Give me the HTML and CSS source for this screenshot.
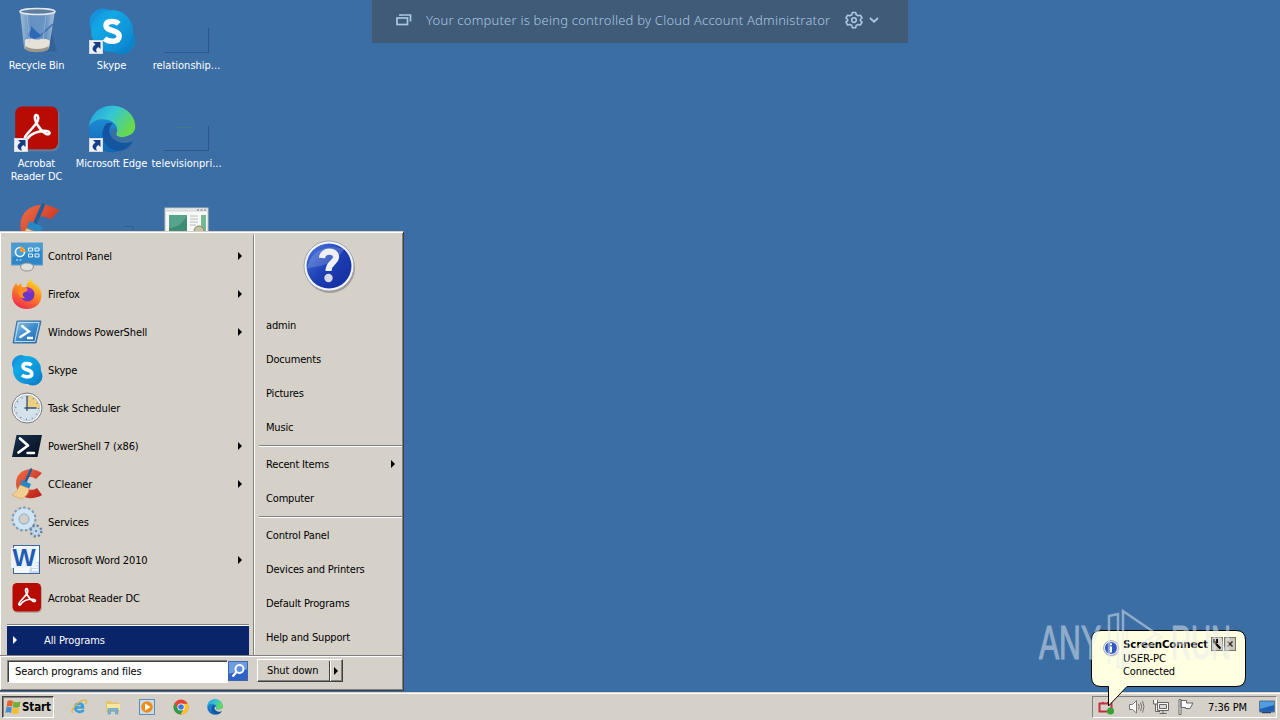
FILE: index.html
```
<!DOCTYPE html>
<html lang="en">
<head>
    <meta charset="UTF-8">
    <title>Desktop</title>
    <link rel="stylesheet" href="styles.css">
</head>
<body>

<!-- shared icons -->
<svg class="defs" width="0" height="0">
    <defs>
        <linearGradient id="gSkype" x1="0" y1="0" x2="1" y2="1"><stop offset="0" stop-color="#1590d8"/><stop offset=".3" stop-color="#12a8e6"/><stop offset="1" stop-color="#0c82cc"/></linearGradient>
        <linearGradient id="gEdgeTop" x1="0" y1="0" x2="1" y2=".5"><stop offset="0" stop-color="#1f9ee0"/><stop offset=".5" stop-color="#35c6d4"/><stop offset="1" stop-color="#68da4c"/></linearGradient>
        <linearGradient id="gEdgeLeft" x1="0" y1="0" x2="0" y2="1"><stop offset="0" stop-color="#239be0"/><stop offset="1" stop-color="#1264b4"/></linearGradient>
        <linearGradient id="gFox" x1=".8" y1="0" x2=".3" y2="1"><stop offset="0" stop-color="#ffe42e"/><stop offset=".45" stop-color="#ff8a1d"/><stop offset="1" stop-color="#f0284f"/></linearGradient>
        <linearGradient id="gPs" x1="0" y1="0" x2="1" y2="1"><stop offset="0" stop-color="#9ed0ec"/><stop offset=".5" stop-color="#3d8ccc"/><stop offset="1" stop-color="#1c61a4"/></linearGradient>
        <linearGradient id="gPs7" x1="0" y1="0" x2="1" y2="1"><stop offset="0" stop-color="#16304e"/><stop offset="1" stop-color="#080f1c"/></linearGradient>
        <linearGradient id="gCc" x1="0" y1="0" x2="1" y2="1"><stop offset="0" stop-color="#f07048"/><stop offset="1" stop-color="#b81c16"/></linearGradient>
        <linearGradient id="gBin" x1="0" y1="0" x2="1" y2="0"><stop offset="0" stop-color="#a9c3da"/><stop offset=".3" stop-color="#6995c4"/><stop offset=".75" stop-color="#6f9ac8"/><stop offset="1" stop-color="#b6cbdc"/></linearGradient>
        <linearGradient id="gHelp" x1="0" y1="0" x2="1" y2="1"><stop offset="0" stop-color="#4c7be0"/><stop offset=".5" stop-color="#1d3eb4"/><stop offset="1" stop-color="#122c9a"/></linearGradient>

        <symbol id="skype" viewBox="0 0 32 32">
            <circle cx="10" cy="10" r="9" fill="#1593dc"/><circle cx="22" cy="22" r="9.5" fill="#0c84cc"/>
            <circle cx="16" cy="16" r="14" fill="url(#gSkype)"/>
            <path d="M20.500 11.200C18.500 9.200 12 8.600 12 12.400 12 16.600 20.800 15 20.800 19.400 20.800 24 13.500 23.400 11 21" fill="none" stroke="#fff" stroke-width="3.600"/>
        </symbol>
        <symbol id="acrobat" viewBox="0 0 32 32">
            <rect x="2" y="2" width="29" height="29" rx="5" fill="#8c8580" opacity=".5"/>
            <rect x="1.500" y="1" width="28.500" height="28.500" rx="4.500" fill="#b70b04"/>
            <path d="M8 21.500C9 18.500 14 15.500 16.500 10.500 17.500 7.500 15.800 5.800 14.800 7 13.500 9.500 17.500 16.500 22 19.300 25 20.400 25.500 17.500 22 17.300 17.500 17 12 18.800 9.500 22.500 8.800 23.500 7.500 23 8 21.500Z" fill="none" stroke="#fff" stroke-width="1.700" stroke-linejoin="round"/>
        </symbol>
        <symbol id="edge" viewBox="0 0 32 32">
            <circle cx="16" cy="16" r="15.500" fill="url(#gEdgeLeft)"/>
            <path d="M.7 14C2 5 9 .5 16 .5 25 .5 31.500 7 31.500 14 31.500 19 27.500 21.500 23.500 21.500 20 21.500 18 20.500 19.200 18.500 20.500 16 18.500 11 13 9.800 8 8.700 3 10 .7 14Z" fill="url(#gEdgeTop)"/>
            <path d="M11 14C7 22 12 31 22 30.500 26 29.500 28.500 27 30 24 24 26.500 16 24.500 14.500 19 13.800 16 14.800 13.500 16.500 12 14 11.500 12 12 11 14Z" fill="#1555a0"/>
            <path d="M33 18.500C31.500 22.500 30.500 23.500 29.700 24.200 24 27 16.500 24.500 15 19 15 17 17 15 18.700 15.500 19.500 17 18.300 18.500 18.500 19.600 20 22.500 27 22.500 33 16Z" fill="var(--back)"/>
        </symbol>
        <symbol id="ccleaner" viewBox="0 0 32 32">
            <path d="M31 5C20-3 5 2 5 15 5 29 19 34 31 27L26 20C20 24 14 21 14 15 14 9 20 7 25 11Z" fill="url(#gCc)"/>
            <path d="M20 1.500 14.500 14" stroke="#215f9c" stroke-width="2.600" stroke-linecap="round"/>
            <path d="M11 12 20 16 18 20.500 9 17Z" fill="#2787c4"/>
            <path d="M9 17 18 20.500C18 25 15 29 10 31L1 27C5 25 7 21 9 17Z" fill="#f3d298" stroke="#c99b58" stroke-width=".6"/>
            <path d="M5 28 12 20M8 29.500 15 21" stroke="#e6be7e" stroke-width=".8"/>
        </symbol>
        <symbol id="arrow" viewBox="0 0 14 14">
            <rect x=".5" y=".5" width="13" height="13" fill="#eef2f8" stroke="#d2dae2"/>
            <path d="M4 2H11.500V9L9.300 7C7 8.500 6.500 10 8 12.500 3.500 12 1.500 7.500 6.500 4.500Z" fill="#173e86"/>
        </symbol>
    </defs>
</svg>

<div class="desktop">
    <div class="icons">
        <div class="shortcut">
            <svg class="pic" viewBox="0 0 48 48">
                <path d="M34 12 44 44 30 45Z" fill="#2b5685" opacity=".45"/>
                <path d="M7 4 11 41C15 46 32 46 36 41L42 4Z" fill="url(#gBin)" opacity=".9"/>
                <path d="M12 33C18 30 23 34 28 32 32 31 36 33 37 34L36 41C31 45 16 45 12 41Z" fill="#e6e2d8"/>
                <path d="M12 39C18 43 30 43 36 39L35 43C30 46 17 46 13 43Z" fill="#9a968d"/>
                <path d="M16 30C14 26 19 25 18 19L23 24 29 29 22 32Z" fill="#2f68b8"/>
                <path d="M28 28 40 17" stroke="#3d6eae" stroke-width="1.500"/>
                <path d="M14 8 17 36M33 8 30 33" stroke="#a8c6e2" opacity=".5"/>
                <ellipse cx="24.500" cy="4.500" rx="17.500" ry="3" fill="#5e7f9f" stroke="#e2e8ec" stroke-width="1.600"/>
            </svg>
            <span>Recycle Bin</span>
        </div>
        <div class="shortcut">
            <svg class="pic"><use href="#skype"/></svg>
            <svg class="link"><use href="#arrow"/></svg>
            <span>Skype</span>
        </div>
        <div class="shortcut">
            <div class="pic"><i class="ghost"></i></div>
            <span class="wide">relationship...</span>
        </div>
        <div class="shortcut">
            <svg class="pic"><use href="#acrobat"/></svg>
            <svg class="link"><use href="#arrow"/></svg>
            <span>Acrobat<br>Reader DC</span>
        </div>
        <div class="shortcut">
            <svg class="pic"><use href="#edge"/></svg>
            <svg class="link"><use href="#arrow"/></svg>
            <span>Microsoft Edge</span>
        </div>
        <div class="shortcut">
            <div class="pic"><i class="ghost green"></i></div>
            <span class="wide">televisionpri...</span>
        </div>
        <div class="shortcut">
            <svg class="pic"><use href="#ccleaner"/></svg>
        </div>
        <div class="shortcut">
            <svg class="pic" viewBox="0 0 48 48"><path d="M37 23.500H45V27" fill="none" stroke="#315f90"/></svg>
        </div>
        <div class="shortcut">
            <svg class="pic" viewBox="0 0 48 48">
                <rect x="2" y="5" width="43" height="36" fill="#f7f8f6" stroke="#b9c0c4"/>
                <path d="M3 7.500H44" stroke="#d5dadd" stroke-width="2"/><path d="M34 7H43" stroke="#6b7078" stroke-dasharray="2 1.500"/>
                <rect x="6" y="12" width="18" height="24" fill="#57a38c"/><path d="M6 25C14 25 20 20 24 13V31H6Z" fill="#3d8c74"/>
                <path d="M27 13H35M27 16H35M27 19H35M27 22H33" stroke="#b8bcc0"/><rect x="38" y="12" width="5" height="20" fill="#75b78f"/>
                <circle cx="36" cy="28" r="5" fill="#c3c4a2" stroke="#83866c"/>
            </svg>
        </div>
    </div>

    <div class="banner">
        <svg width="16" height="14" viewBox="0 0 16 14" fill="none" stroke="#a9c6e2" stroke-width="1.700"><rect x="1" y="5" width="10.500" height="6.500"/><path d="M4 2H14.500V8.500M4 1.300V3"/></svg>
        <span>Your computer is being controlled by Cloud Account Administrator</span>
        <svg class="gear" width="18" height="18" viewBox="0 0 18 18" fill="none" stroke="#a9c6e2" stroke-width="1.600" stroke-linejoin="round"><path d="M7.400 1.500H10.600L11.200 3.700 13.200 4.800 15.400 4.200 17 7 15.400 8.500V9.700L17 11.200 15.400 14 13.200 13.400 11.200 14.500 10.600 16.700H7.400L6.800 14.500 4.800 13.400 2.600 14 1 11.200 2.600 9.700V8.500L1 7 2.600 4.200 4.800 4.800 6.800 3.700Z"/><circle cx="9" cy="9.100" r="2.300"/></svg>
        <svg width="10" height="6" viewBox="0 0 10 6" fill="none" stroke="#a9c6e2" stroke-width="1.800"><path d="M1 1 5 4.700 9 1"/></svg>
    </div>

    <div class="start-menu">
        <div class="columns">
            <div class="programs">
                <div class="program sub">
                    <svg viewBox="0 0 32 32"><rect x=".5" y="3" width="31" height="22" fill="#2f87c8" stroke="#5b9fce"/><path d="M1 3.500H31V10L1 17Z" fill="#65b0e0" opacity=".5"/><circle cx="9" cy="12" r="4.500" fill="none" stroke="#e9f5fc" stroke-width="1.600"/><path d="M9 12V6.500A5 5 0 0 1 14 12Z" fill="#f59a32"/><path d="M17.500 8H21.500V11H17.500ZM24 8H28V11H24ZM17.500 14H21.500V17H17.500ZM24 14H28V17H24Z" fill="none" stroke="#e6f4fc"/><path d="M5 20H12" stroke="#cfe8f6" stroke-dasharray="2 1.500"/><ellipse cx="16" cy="27" rx="6.500" ry="4" fill="#e0e0de" stroke="#92928f"/></svg>
                    <span>Control Panel</span>
                </div>
                <div class="program sub">
                    <svg viewBox="0 0 32 32"><path d="M1 17C1 11 3 8 5 5L7 8 10 5 11 9 15 9C16 5 18 3 20 1L22 5C27 7 31 12 30.500 18 30 26 24 31 16 31 7 31 1 25 1 17Z" fill="url(#gFox)"/><circle cx="16.500" cy="16.500" r="7" fill="#6b35c8"/><path d="M7 11C11 8 16 9 18 12L14 14C11 15 11 18 14 20 10 21 7 18 7 11Z" fill="#ff8c22"/><path d="M16 9C20 10 22 12 22 14L17 15Z" fill="#a32fc0"/></svg>
                    <span>Firefox</span>
                </div>
                <div class="program sub">
                    <svg viewBox="0 0 32 32"><path d="M6 5H30L25 27H2Z" fill="url(#gPs)" stroke="#3b6e9b"/><path d="M7.500 6.500H28.200L23.800 25.500H3.800Z" fill="none" stroke="#b6dcf2"/><path d="M10.500 9.500 18 15.500 8.500 21.500M16 22H22" fill="none" stroke="#fff" stroke-width="2.400"/></svg>
                    <span>Windows PowerShell</span>
                </div>
                <div class="program"><svg><use href="#skype"/></svg><span>Skype</span></div>
                <div class="program">
                    <svg viewBox="0 0 32 32"><circle cx="16" cy="16" r="15" fill="#fafafa" stroke="#6f7a84"/><circle cx="16" cy="16" r="12.800" fill="#d4e2ee" stroke="#a7b4be" stroke-width=".7"/><path d="M16 16V3.500A12.500 12.500 0 0 1 28.500 16Z" fill="#eccf80"/><circle cx="16" cy="16" r="11.300" fill="none" stroke="#6f889d" stroke-width="1.500" stroke-dasharray="1 4.917"/><path d="M16 4V19M13.500 16H25.500" stroke="#34506c" stroke-width="1.300"/></svg>
                    <span>Task Scheduler</span>
                </div>
                <div class="program sub">
                    <svg viewBox="0 0 32 32"><path d="M5.500 5H31L26.500 27H1Z" fill="url(#gPs7)"/><path d="M9 8.500 17 15.500 7.500 22.500" fill="none" stroke="#fff" stroke-width="2.700" stroke-linecap="round" stroke-linejoin="round"/><path d="M16.500 23H23" stroke="#fff" stroke-width="2.500" stroke-linecap="round"/></svg>
                    <span>PowerShell 7 (x86)</span>
                </div>
                <div class="program sub"><svg><use href="#ccleaner"/></svg><span>CCleaner</span></div>
                <div class="program">
                    <svg viewBox="0 0 32 32"><circle cx="13" cy="13" r="10.500" fill="none" stroke="#769cbe" stroke-width="4" stroke-dasharray="2.300 2.098"/><circle cx="13" cy="13" r="8" fill="none" stroke="#cfe4f4" stroke-width="5"/><circle cx="13" cy="13" r="5" fill="#d5d0c8" stroke="#8badca"/><circle cx="25" cy="25" r="5" fill="none" stroke="#5c83a7" stroke-width="3" stroke-dasharray="1.900 2.027"/><circle cx="25" cy="25" r="3.200" fill="#e6edf2" stroke="#b9d4e8" stroke-width="2"/><circle cx="25" cy="25" r="1.500" fill="#7591a9"/></svg>
                    <span>Services</span>
                </div>
                <div class="program sub">
                    <svg viewBox="0 0 32 32"><rect x="2.500" y="1.500" width="26" height="28" fill="#f5f9fd" stroke="#3f659a"/><path d="M20 18H28V29H18Z" fill="#c9d9e8"/><path d="M21 20H27M21 23H27M21 26H27" stroke="#fff" stroke-width="1.500"/><path d="M0 4 25 2.500V23L0 24Z" fill="#eaf2fb"/><text x="1.500" y="21.500" class="word-w" textLength="23" lengthAdjust="spacingAndGlyphs">W</text></svg>
                    <span>Microsoft Word 2010</span>
                </div>
                <div class="program"><svg><use href="#acrobat"/></svg><span>Acrobat Reader DC</span></div>
                <div class="all-programs">All Programs</div>
            </div>
            <div class="places">
                <svg class="avatar" viewBox="0 0 54 54"><circle cx="28" cy="29" r="25" fill="#77736d" opacity=".55"/><circle cx="27" cy="27" r="25" fill="#f3f4f8" stroke="#a3a6b0"/><circle cx="27" cy="27" r="22.500" fill="url(#gHelp)"/><path d="M5 29C9 11 24 5 42 10 34 24 20 28 5 29Z" fill="#fff" opacity=".17"/><path d="M20 19C20.500 10.500 34.500 10.500 34 18.500 33.500 24 26.500 23.500 26.500 32" fill="none" stroke="#f0f1f6" stroke-width="6.200"/><circle cx="26.500" cy="39" r="4.200" fill="#d7dae6"/></svg>
                <div class="place">admin</div>
                <div class="place">Documents</div>
                <div class="place">Pictures</div>
                <div class="place">Music</div>
                <hr>
                <div class="place sub">Recent Items</div>
                <div class="place">Computer</div>
                <hr>
                <div class="place">Control Panel</div>
                <div class="place">Devices and Printers</div>
                <div class="place">Default Programs</div>
                <div class="place">Help and Support</div>
            </div>
        </div>
        <div class="menu-foot">
            <div class="search">Search programs and files</div>
            <svg class="search-btn" viewBox="0 0 20 20"><rect width="20" height="20" fill="#2f62c4"/><path d="M0 0H20V8L0 13Z" fill="#87b6ee" opacity=".7"/><rect x=".5" y=".5" width="19" height="19" fill="none" stroke="#3e66a8"/><circle cx="11.500" cy="8" r="4" fill="#5b8fe0" stroke="#fff" stroke-width="1.900"/><path d="M8.500 11 4.500 15.500" stroke="#fff" stroke-width="2.300"/></svg>
            <div class="shutdown"><span>Shut down</span><i></i></div>
        </div>
    </div>

    <svg class="balloon" width="157" height="80" viewBox="0 0 157 80">
        <path d="M10 .5H145Q154.500 .5 154.500 10V47Q154.500 56.500 145 56.500H36L17.500 76V56.500H10Q.5 56.500 .5 47V10Q.5 .5 10 .5Z" fill="#ffffe1" stroke="#000"/>
        <circle cx="20.500" cy="18.500" r="8" fill="#c9ccd4"/><circle cx="20" cy="18" r="7.500" fill="#e5e9f2" stroke="#8c98ae" stroke-width=".7"/><circle cx="20" cy="18" r="6" fill="#3158c0"/><path d="M20 13.300V15.300M20 16.500V22.500" stroke="#fff" stroke-width="2"/>
        <text x="32" y="18" class="b-title" textLength="85" lengthAdjust="spacingAndGlyphs">ScreenConnect</text>
        <text x="32" y="32" textLength="43" lengthAdjust="spacingAndGlyphs">USER-PC</text>
        <text x="32" y="45" textLength="52" lengthAdjust="spacingAndGlyphs">Connected</text>
        <g stroke="#77746c" fill="#c9c5b9"><rect x="120.500" y="7.500" width="11" height="13"/><rect x="133.500" y="7.500" width="11" height="13"/></g>
        <path d="M123 9V12L129.500 18.500M123 12H126V9" fill="none" stroke="#000" stroke-width="2"/><path d="M136.500 11.500 141.500 16.500M141.500 11.500 136.500 16.500" stroke="#222" stroke-width="1.300"/>
    </svg>

    <svg class="watermark" width="200" height="64" viewBox="0 0 200 64">
        <text x="3" y="51" textLength="62" lengthAdjust="spacingAndGlyphs">ANY</text>
        <path d="M73 56V8L82 6V59L87 60V3L125 29 91 55V50M91 23V47L119 27" fill="none" stroke="#e6ebf0" stroke-width="2.500"/>
        <text x="135" y="51" textLength="60" lengthAdjust="spacingAndGlyphs">RUN</text>
    </svg>
</div>

<div class="taskbar">
    <div class="start-btn">
        <svg width="16" height="16" viewBox="0 0 16 16"><path d="M2.500 2Q5 .5 8 2L7 7.700Q4.500 6.200 1.500 7.700Z" fill="#e7612c"/><path d="M8.600 2.500Q12 4 15.500 2.500L14.500 8Q11 9.500 7.700 8Z" fill="#73ae38"/><path d="M1.300 8.300Q4 7 6.800 8.500L6 14Q3 12.500 .3 14Z" fill="#438fd2"/><path d="M7.500 8.800Q11 10.200 14.200 8.800L13.200 14.500Q10 15.500 6.600 14.300Z" fill="#f5bd2d"/></svg>
        <b>Start</b>
    </div>
    <div class="quick">
        <svg viewBox="0 0 16 16"><path d="M13.300 8.500H4.200C4.500 3.500 11.500 3.500 12 8M4.200 8.500C4.500 13.500 10.500 14 12.700 11" fill="none" stroke="#3c9fdc" stroke-width="2.700"/><path d="M1.500 14C-1 10 10-.5 15 1.500 16 2.300 15.300 4 14.500 5" fill="none" stroke="#e4b53a" stroke-width="1.300"/></svg>
        <svg viewBox="0 0 16 16"><path d="M1 2H6L7 3.500H14V13H1Z" fill="#e5c569"/><path d="M2 5H15V11H2Z" fill="#f8e6a1"/><path d="M3 15V9.500H13V15H10.500V12H5.500V15Z" fill="#77b6df" stroke="#498db9" stroke-width=".5"/></svg>
        <svg viewBox="0 0 16 16"><rect x=".5" y=".5" width="15" height="15" fill="#c9dced" stroke="#5e8db9"/><circle cx="8" cy="8" r="5.800" fill="#ef8c1c"/><path d="M6 4.500V11.500L11.500 8Z" fill="#fff"/></svg>
        <svg viewBox="0 0 16 16"><circle cx="8" cy="8" r="7.500" fill="#e34234"/><path d="M1.500 4.300A7.500 7.500 0 0 0 7.500 15.500L11.200 9.500 8 8 4.800 9.800Z" fill="#2d9e4e"/><path d="M7.500 15.500A7.500 7.500 0 0 0 14.700 4.700H8L11.300 9.500Z" fill="#fbc62d"/><circle cx="8" cy="8" r="3.600" fill="#fff"/><circle cx="8" cy="8" r="2.800" fill="#3b78e0"/></svg>
        <svg><use href="#edge"/></svg>
    </div>
    <div class="tray">
        <svg width="18" height="18" viewBox="0 0 18 18"><path d="M5 4V5.500M10 4V5.500M1.500 5.500H13.500V13.500H1.500Z" fill="none" stroke="#c2313b" stroke-width="2"/><circle cx="12.500" cy="13" r="3.500" fill="#39a035"/></svg>
        <svg class="speaker" width="18" height="18" viewBox="0 0 18 18" fill="none" stroke="#777"><path d="M1.500 6.500H4.500L8.500 2.500V15L4.500 11.500H1.500Z" fill="#fafafa"/><path d="M10.500 6Q12 8.500 10.500 11.500M12.500 4.500Q15 8.500 12.500 13M14.500 3Q17.500 8.500 14.500 14.500"/></svg>
        <svg width="18" height="18" viewBox="0 0 18 18" fill="#f7f7f5" stroke="#666"><path d="M5.500 4.500H16.500V12.500H5.500ZM11 12.500V15M7.500 15.500H14.500M1.500 2V6H5.500V2M3.500 6V13.500H8"/><path d="M7.500 6.500H14.500V10.500H7.500Z" fill="#d9d9d5"/></svg>
        <svg width="18" height="18" viewBox="0 0 18 18" fill="#fafafa" stroke="#666"><path d="M2 1.500H4V16.500H2ZM4 2.500H9.500V5H16L13 10.500H8.500V9.500H4Z"/></svg>
        <span class="clock">7:36 PM</span>
        <svg width="16" height="16" viewBox="0 0 16 16"><path d="M.5 2H15.500V13H.5Z" fill="#1c60b7" stroke="#5e7688"/><path d="M1 2.500H15V6L1 10Z" fill="#539cdd"/><path d="M3 13.500H12" stroke="#25456b" stroke-width="1.500"/></svg>
    </div>
</div>

</body>
</html>
```
FILE: styles.css
```
*{
box-sizing:border-box;
}

body{
--back:#3a6ea5;
margin:0;
width:1280px;
height:720px;
overflow:hidden;
display:flex;
flex-direction:column;
background-color:#3a6ea5;
font-family:"DejaVu Sans Condensed","DejaVu Sans",sans-serif;
font-size:11px;
line-height:13px;
letter-spacing:-0.12px;
color:#000;
}

.defs{
position:absolute;
}

.desktop{
height:692px;
position:relative;
}

.icons{
display:grid;
grid-template-columns:repeat(3,73px);
grid-auto-rows:98px;
column-gap:2px;
padding-top:8px;
height:232px;
overflow:hidden;
}

.shortcut{
position:relative;
display:flex;
flex-direction:column;
align-items:center;
color:#fff;
text-align:center;
white-space:nowrap;
}

.pic{
width:48px;
height:48px;
flex:none;
margin-top:-1px;
margin-bottom:4px;
}

.link{
position:absolute;
left:14px;
top:32px;
width:14px;
height:14px;
}

.wide{
letter-spacing:0;
}

.ghost{
display:block;
width:45px;
height:25px;
margin:21px 0 0 1px;
border-right:1px solid #2a5788;
border-bottom:1px solid #2a5788;
}

.green{
background:linear-gradient(#3e7c88,#3e7c88) 12px 1px / 16px 1px no-repeat;
}

.banner{
position:absolute;
left:372px;
top:0;
width:536px;
height:43px;
padding:0 0 3px 24px;
display:flex;
align-items:center;
background-color:#405b77;
color:#a9c6e2;
font-family:"Noto Sans","Open Sans",sans-serif;
font-weight:300;
font-size:13px;
letter-spacing:.22px;
white-space:nowrap;
}

.banner span{
width:405px;
margin:1px 14px 0;
}

.gear{
margin-right:6px;
}

/* start menu */
.start-menu{
position:absolute;
left:0;
top:231px;
width:404px;
height:460px;
background-color:#d5d0c8;
border-top:1px solid #d5d0c8;
border-right:1px solid #404040;
border-bottom:1px solid #404040;
box-shadow:inset 1px 1px #fff,inset -1px -1px #808080;
}

.columns{
display:flex;
height:424px;
border-bottom:1px solid #808080;
padding-top:3px;
}

.programs{
width:254px;
padding:2px 4px 0 7px;
border-right:1px solid #808080;
}

.program{
display:flex;
align-items:center;
height:38px;
padding-left:4px;
}

.program svg{
width:32px;
height:32px;
margin-right:5px;
}

.sub:after,.all-programs:before,.shutdown i:after{
content:"";
border:4px solid transparent;
border-left:4px solid #000;
border-right:0;
}

.sub:after{
margin-left:auto;
margin-right:7px;
}

.place.sub:after{
margin-right:8px;
}

.all-programs{
display:flex;
align-items:center;
margin-top:7px;
height:31px;
padding-left:6px;
background-color:#0a246a;
border-top:1px solid #808080;
box-shadow:inset 0 1px #fff;
color:#fff;
}

.all-programs:before{
border-left-color:#fff;
margin-right:27px;
}

.places{
flex:1;
padding-left:4px;
border-left:1px solid #fff;
}

.avatar{
display:block;
width:54px;
height:54px;
margin:4px 0 15px 43px;
}

.place{
display:flex;
align-items:center;
height:34px;
padding-left:7px;
letter-spacing:-0.17px;
}

.places hr{
height:2px;
margin:1px 1px 0 0;
border:0;
border-top:1px solid #808080;
border-bottom:1px solid #fff;
}

.menu-foot{
display:flex;
padding:3px 0 0 7px;
border-top:1px solid #fff;
margin-right:2px;
}

.search{
width:221px;
height:23px;
padding:4px 7px;
background-color:#fff;
border:1px solid #808080;
border-right-color:#fff;
border-bottom-color:#fff;
box-shadow:inset 1px 1px #404040;
}

.search-btn{
width:20px;
height:20px;
margin-top:1px;
}

.shutdown{
display:flex;
align-items:center;
width:86px;
height:23px;
margin:-1px 0 0 9px;
border:1px solid #fff;
border-right-color:#404040;
border-bottom-color:#404040;
box-shadow:inset -1px -1px #808080;
}

.shutdown span{
width:71px;
padding-left:9px;
}

.shutdown i{
display:flex;
align-items:center;
height:20px;
padding-left:4px;
border-left:1px solid #404040;
box-shadow:inset 1px 0 #fff;
}

.word-w{
font-family:"Liberation Sans",sans-serif;
font-weight:bold;
font-size:24px;
fill:#1f5bb2;
}

.balloon{
position:absolute;
left:1091px;
top:630px;
z-index:2;
}

.b-title{
font-weight:bold;
}

.watermark{
position:absolute;
left:1036px;
top:608px;
z-index:3;
opacity:.5;
fill:#e6ebf0;
font-family:"Liberation Sans Narrow","Liberation Sans",sans-serif;
font-size:49px;
letter-spacing:0;
}

.watermark text{
stroke:#e6ebf0;
stroke-width:1.2px;
}

/* taskbar */
.taskbar{
--back:#d5d0c8;
height:28px;
display:flex;
align-items:flex-start;
padding:4px 3px 0 2px;
background-color:#d5d0c8;
box-shadow:inset 0 1px #d5d0c8,inset 0 2px #fff;
}

.start-btn{
display:flex;
align-items:center;
width:52px;
height:22px;
padding-left:2px;
border:1px solid #404040;
border-right-color:#fff;
border-bottom-color:#fff;
box-shadow:inset 1px 1px #808080;
}

.start-btn b{
margin:1px 0 0 1px;
font-size:11.5px;
}

.quick{
display:flex;
gap:18px;
margin:3px 0 0 17px;
}

.quick svg{
width:16px;
height:16px;
}

.tray{
display:flex;
align-items:center;
gap:7px;
width:185px;
height:22px;
margin-left:auto;
padding-left:5px;
border:1px solid #808080;
border-right-color:#fff;
border-bottom-color:#fff;
}

.speaker{
margin:0 -1px 0 5px;
}

.clock{
width:40px;
margin:0 4px 0 6px;
white-space:nowrap;
}
```
